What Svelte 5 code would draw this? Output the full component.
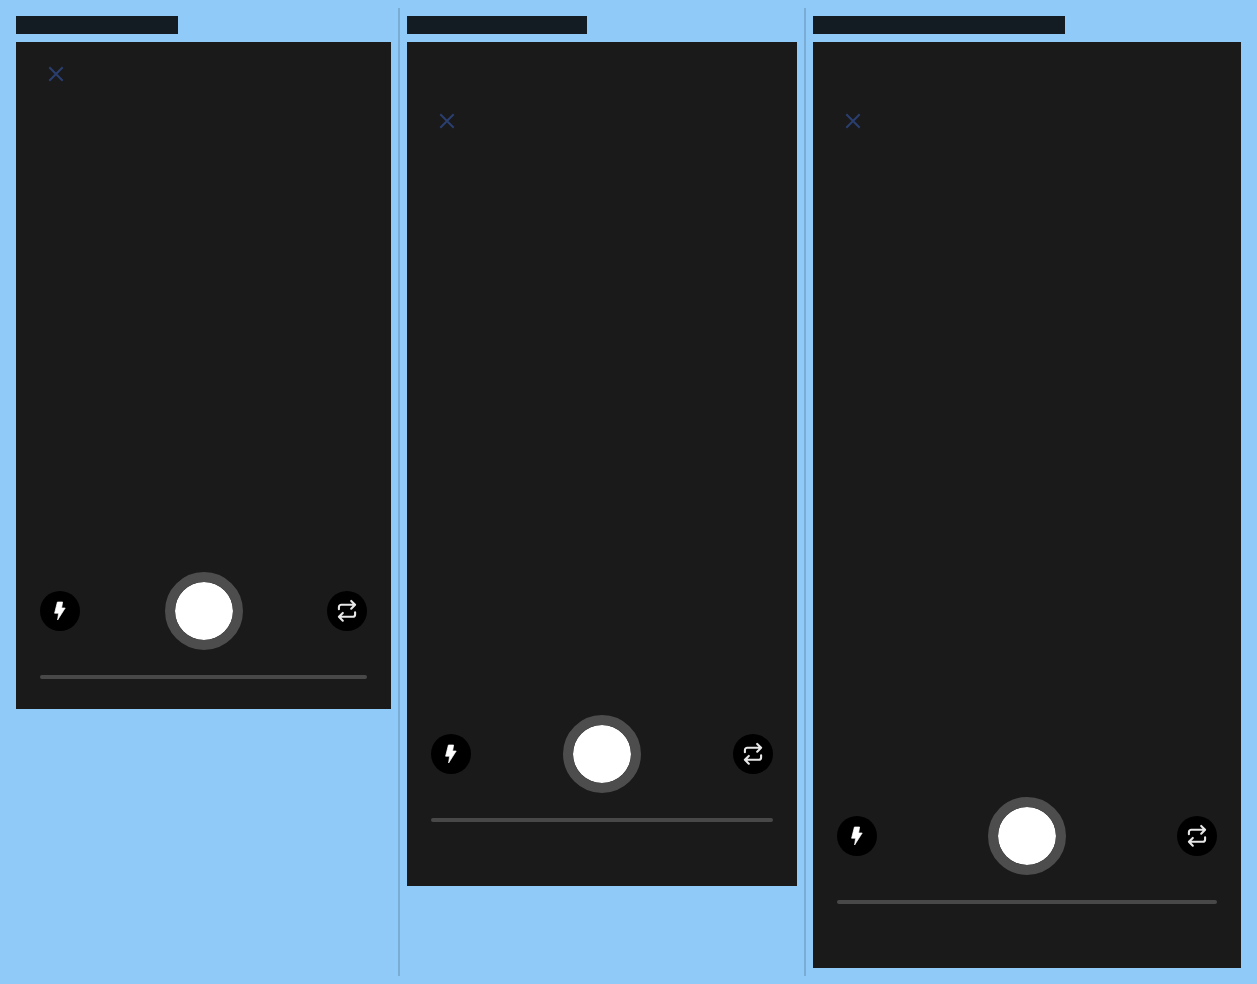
<script>
  const devices = [
    { width: 375, height: 667, label: 162, top: 0, bottom: 0 },
    { width: 390, height: 844, label: 180, top: 47, bottom: 34 },
    { width: 428, height: 926, label: 252, top: 47, bottom: 34 }
  ];
</script>

<main>
  {#each devices as device, i}
    {#if i > 0}<div class="divider"></div>{/if}
    <section style:flex-grow={device.width}>
      <div class="label" style:width="{device.label}px"></div>
      <div
        class="screen"
        style:aspect-ratio="{device.width} / {device.height}"
        style:--inset-top="{device.top}px"
        style:--inset-bottom="{device.bottom}px"
      >
        <button class="close" aria-label="Close">
          <svg width="16" height="16" viewBox="0 0 16 16">
            <path d="M1.3 1.3 14.7 14.7M14.7 1.3 1.3 14.7" fill="none" stroke="#2a3f70" stroke-width="2" />
          </svg>
        </button>
        <div class="controls">
          <button class="round" aria-label="Flash">
            <svg width="20" height="20" viewBox="0 0 20 20">
              <path d="M7.4 1h5.2l-1 6h3.6L7.6 19l1-6.8H4.6z" fill="#fff" stroke="#fff" stroke-width=".7" stroke-linejoin="round" />
            </svg>
          </button>
          <button class="shutter" aria-label="Take photo"></button>
          <button class="round" aria-label="Switch camera">
            <svg width="24" height="24" viewBox="0 0 24 24" fill="none" stroke="#e8e8e8" stroke-width="2.1" stroke-linecap="round" stroke-linejoin="round">
              <path d="m16.2 1.9 3.9 3.9-3.9 3.9M3.9 10.3V8.2a2.4 2.4 0 0 1 2.4-2.4H20M7.8 21.7l-3.9-3.9 3.9-3.9M20.1 13.2v2.2a2.4 2.4 0 0 1-2.4 2.4H4" />
            </svg>
          </button>
        </div>
        <div class="track"></div>
      </div>
    </section>
  {/each}
</main>

<style>
  :global(body) {
    margin: 0;
    background: #90caf9;
    font-family: Roboto, sans-serif;
  }
  main {
    display: flex;
    gap: 7px;
    box-sizing: border-box;
    min-height: 100vh;
    padding: 8px 16px;
  }
  .divider {
    flex: none;
    width: 2px;
    background: #7aacd5;
  }
  section {
    flex: 1 1 0;
    min-width: 0;
    padding: 8px 0;
  }
  .label {
    height: 18px;
    max-width: 100%;
    margin-bottom: 8px;
    background: #141c23;
  }
  .screen {
    display: flex;
    flex-direction: column;
    box-sizing: border-box;
    padding: calc(16px + var(--inset-top)) 24px calc(30px + var(--inset-bottom));
    background: #1a1a1a;
  }
  button {
    display: flex;
    align-items: center;
    justify-content: center;
    flex: none;
    box-sizing: border-box;
    border: 0;
    padding: 0;
    background: none;
    cursor: pointer;
  }
  .close {
    width: 32px;
    height: 32px;
  }
  .controls {
    display: flex;
    align-items: center;
    justify-content: space-between;
    margin-top: auto;
  }
  .round {
    width: 40px;
    height: 40px;
    border-radius: 50%;
    background: #000;
  }
  .shutter {
    width: 78px;
    height: 78px;
    border: 10px solid #4d4d4d;
    border-radius: 50%;
    background: #fff;
    background-clip: padding-box;
  }
  .track {
    height: 4px;
    margin-top: 25px;
    border-radius: 2px;
    background: #484848;
  }
</style>
